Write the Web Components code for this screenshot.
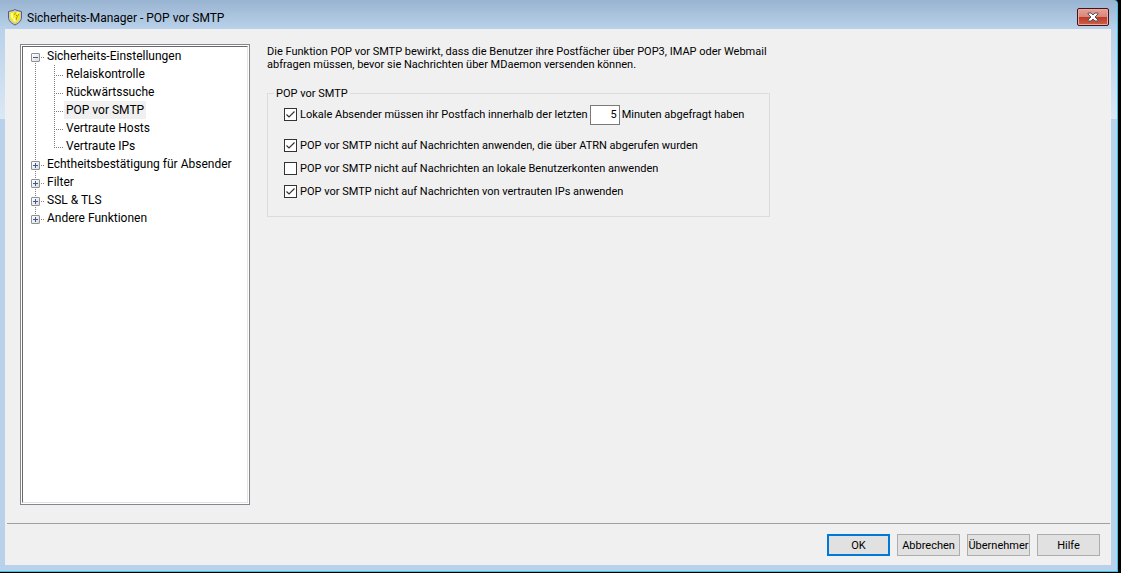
<!DOCTYPE html>
<html lang="de">
<head>
<meta charset="utf-8">
<title>Sicherheits-Manager - POP vor SMTP</title>
<style>
  body {
    margin: 0;
    background: #000;
    font: 11px/13px Roboto, "Liberation Sans", sans-serif;
    color: #000;
  }
</style>
</head>
<body>
<app-window heading="Sicherheits-Manager - POP vor SMTP">
  <tree-view slot="nav">
    <tree-item label="Sicherheits-Einstellungen" open>
      <tree-item label="Relaiskontrolle"></tree-item>
      <tree-item label="Rückwärtssuche"></tree-item>
      <tree-item label="POP vor SMTP" selected></tree-item>
      <tree-item label="Vertraute Hosts"></tree-item>
      <tree-item label="Vertraute IPs"></tree-item>
    </tree-item>
    <tree-item label="Echtheitsbestätigung für Absender" closed></tree-item>
    <tree-item label="Filter" closed></tree-item>
    <tree-item label="SSL &amp; TLS" closed></tree-item>
    <tree-item label="Andere Funktionen" closed></tree-item>
  </tree-view>
  <pop-settings></pop-settings>
  <push-button slot="actions" label="OK" primary></push-button>
  <push-button slot="actions" label="Abbrechen"></push-button>
  <push-button slot="actions" label="Übernehmer"></push-button>
  <push-button slot="actions" label="Hilfe"></push-button>
</app-window>

<script>
// Window frame: title bar, navigation, page content and button bar
class AppWindow extends HTMLElement {
  connectedCallback() {
    this.attachShadow({ mode: 'open' }).innerHTML = `
      <style>
        :host {
          display: flex;
          flex-direction: column;
          box-sizing: border-box;
          min-height: calc(100vh - 1px);
          margin: 0 3px 1px 0;
          padding: 0 6px 6px 5px;
          border: solid #35c5e4;
          border-width: 0 1px 1px 0;
          border-top-right-radius: 4px;
          background: linear-gradient(#99b4d1, #b9d1ea 29px, #dbe8f5 119px, #b9d1ea 119px);
        }
        header {
          display: flex;
          align-items: center;
          gap: 4px;
          height: 29px;
          padding: 5px 2px 0 2px;
          box-sizing: border-box;
        }
        h1 {
          flex: 1;
          margin: 0;
          padding-top: 1px;
          font: 12px/16px Roboto, "Open Sans", sans-serif;
        }
        .close {
          display: grid;
          place-items: center;
          width: 32px;
          height: 18px;
          padding: 0;
          border: 1px solid #43141c;
          border-radius: 2px;
          background: linear-gradient(#e8a198, #d8877a 48%, #bb3a26 50%, #d0614a);
          box-shadow: inset 0 0 0 1px #e9aaa0;
        }
        .client {
          flex: 1;
          display: flex;
          flex-direction: column;
          background: #f0f0f0;
        }
        .body {
          flex: 1;
          display: flex;
          gap: 17px;
          padding: 15px 15px 18px;
        }
        nav {
          display: flex;
          flex: 0 0 230px;
        }
        main {
          flex: 1;
          padding-top: 1px;
        }
        footer {
          display: flex;
          justify-content: flex-end;
          gap: 7px;
          margin: 0 1px 0 2px;
          padding: 10px 10px 9px;
          border-top: 1px solid #a0a0a0;
        }
        svg {
          display: block;
        }
      </style>
      <header>
        <svg width="16" height="18" viewBox="0 0 16 18" aria-hidden="true">
          <path d="M8 1.500 10 2.500 14.500 3.500V9C14.500 13 12 15 8 17 4 15 1.500 13 1.500 9V3.500L6 2.500Z" fill="#c9ccce" stroke="#5c6064"/>
          <path d="M8 4H13V9C13 12 11 13.500 8 15 5 13.500 3 12 3 9V4Z" fill="#f6ee10"/>
          <path d="M4 5H6V11L4 9ZM7 9 9 12 8 14 6 12ZM10 4H12L11 7Z" fill="#fffcc8"/>
          <path d="M8.500 4.500 7.500 7M12 6 10 9 9 12" fill="none" stroke="#a39d1c"/>
          <path d="M9 7h1v1H9z" fill="#e0701c"/>
        </svg>
        <h1></h1>
        <button class="close" type="button" aria-label="Schließen">
          <svg width="12" height="10" viewBox="0 0 12 10" aria-hidden="true">
            <path d="M1 1H4L6 3 8 1H11V2L8 5 11 8V9H8L6 7 4 9H1V8L4 5 1 2Z" fill="#fff" stroke="#56505c"/>
          </svg>
        </button>
      </header>
      <div class="client">
        <div class="body">
          <nav><slot name="nav"></slot></nav>
          <main><slot></slot></main>
        </div>
        <footer><slot name="actions"></slot></footer>
      </div>
    `;
    this.shadowRoot.querySelector('h1').textContent = this.getAttribute('heading');
  }
}

// Sunken box that holds the tree items
class TreeView extends HTMLElement {
  connectedCallback() {
    this.attachShadow({ mode: 'open' }).innerHTML = `
      <style>
        :host {
          flex: 1;
          display: flex;
          padding: 1px;
          border: 1px solid #828790;
          background: #fff;
          font: 12px/18px Roboto, "Open Sans", sans-serif;
        }
        div {
          flex: 1;
          border: 1px solid;
          border-color: #696969 #e3e3e3 #e3e3e3 #696969;
        }
      </style>
      <div role="tree"><slot></slot></div>
    `;
  }
}

// One tree node; child nodes go in the slot and are indented under it
class TreeItem extends HTMLElement {
  connectedCallback() {
    this.attachShadow({ mode: 'open' }).innerHTML = `
      <style>
        :host {
          display: block;
          background: repeating-linear-gradient(#808080 0 1px, transparent 1px 2px) 12px 0 / 1px 100% no-repeat;
        }
        :host(:last-child) {
          background-size: 1px 11px;
        }
        :host([open]) {
          background-position-y: 10px;
        }
        .row {
          display: flex;
          height: 18px;
        }
        .gutter {
          flex: 0 0 22px;
          box-sizing: border-box;
          padding: 6px 0 0 8px;
          background: repeating-linear-gradient(90deg, #808080 0 1px, transparent 1px 2px) 12px 10px / 9px 1px no-repeat;
        }
        button {
          display: block;
          width: 9px;
          height: 9px;
          padding: 0;
          border: 1px solid #919191;
          border-radius: 1px;
          background:
            linear-gradient(#3b5a9a, #3b5a9a) 1px 3px / 5px 1px no-repeat,
            linear-gradient(135deg, #fff, #dcdcdc);
        }
        :host([closed]) button {
          background:
            linear-gradient(#3b5a9a, #3b5a9a) 1px 3px / 5px 1px no-repeat,
            linear-gradient(#3b5a9a, #3b5a9a) 3px 1px / 1px 5px no-repeat,
            linear-gradient(135deg, #fff, #dcdcdc);
        }
        .label {
          padding: 0 2px;
          white-space: nowrap;
        }
        :host([selected]) .label {
          background: #f0f0f0;
        }
        .children {
          padding-left: 19px;
        }
        :host([closed]) .children {
          display: none;
        }
      </style>
      <div class="row">
        <span class="gutter"></span>
        <span class="label" role="treeitem"></span>
      </div>
      <div class="children" role="group"><slot></slot></div>
    `;
    const label = this.getAttribute('label');
    this.shadowRoot.querySelector('.label').textContent = label;
    if (this.hasAttribute('open') || this.hasAttribute('closed')) {
      const button = document.createElement('button');
      button.type = 'button';
      button.setAttribute('aria-label', label);
      button.addEventListener('click', () => {
        this.toggleAttribute('closed');
      });
      this.shadowRoot.querySelector('.gutter').appendChild(button);
    }
  }
}

// Checkbox with its label
class CheckOption extends HTMLElement {
  connectedCallback() {
    this.attachShadow({ mode: 'open' }).innerHTML = `
      <style>
        :host {
          display: block;
        }
        label {
          display: flex;
          align-items: center;
          gap: 3px;
        }
        .box {
          display: grid;
        }
        input, svg {
          grid-area: 1 / 1;
        }
        input {
          appearance: none;
          box-sizing: border-box;
          width: 13px;
          height: 13px;
          margin: 0;
          border: 1px solid #333;
          background: #fff;
        }
        svg {
          visibility: hidden;
          pointer-events: none;
        }
        input:checked + svg {
          visibility: visible;
        }
      </style>
      <label>
        <span class="box">
          <input type="checkbox">
          <svg width="13" height="13" viewBox="0 0 13 13" aria-hidden="true">
            <path d="M2.500 6.500 5 9 10.500 3.500" fill="none" stroke="#333" stroke-width="1.200"/>
          </svg>
        </span>
        <span><slot></slot></span>
      </label>
    `;
    this.shadowRoot.querySelector('input').checked = this.hasAttribute('checked');
  }
}

// Settings page "POP vor SMTP"
class PopSettings extends HTMLElement {
  connectedCallback() {
    this.attachShadow({ mode: 'open' }).innerHTML = `
      <style>
        :host {
          display: block;
          max-width: 503px;
        }
        p {
          margin: 0 0 16px;
        }
        fieldset {
          margin: 0;
          padding: 3px 16px 13px;
          border: 1px solid #dcdcdc;
        }
        legend {
          margin-left: -10px;
          padding: 0 2px;
        }
        .interval {
          display: flex;
          align-items: center;
          gap: 2px;
          margin-bottom: 8px;
        }
        .interval label {
          display: flex;
          align-items: center;
          gap: 2px;
        }
        .interval input {
          box-sizing: border-box;
          width: 30px;
          height: 20px;
          padding: 0 2px;
          border: 1px solid #7a7a7a;
          background: #fff;
          font: inherit;
          text-align: right;
        }
        check-option {
          height: 23px;
          align-content: center;
        }
      </style>
      <p>Die Funktion POP vor SMTP bewirkt, dass die Benutzer ihre Postfächer über POP3, IMAP oder Webmail abfragen müssen, bevor sie Nachrichten über MDaemon versenden können.</p>
      <fieldset>
        <legend>POP vor SMTP</legend>
        <div class="interval">
          <check-option checked>Lokale Absender müssen ihr Postfach innerhalb der letzten</check-option>
          <label><input type="text" inputmode="numeric" value="5"> Minuten abgefragt haben</label>
        </div>
        <check-option checked>POP vor SMTP nicht auf Nachrichten anwenden, die über ATRN abgerufen wurden</check-option>
        <check-option>POP vor SMTP nicht auf Nachrichten an lokale Benutzerkonten anwenden</check-option>
        <check-option checked>POP vor SMTP nicht auf Nachrichten von vertrauten IPs anwenden</check-option>
      </fieldset>
    `;
  }
}

// Button of the bottom bar
class PushButton extends HTMLElement {
  connectedCallback() {
    this.attachShadow({ mode: 'open' }).innerHTML = `
      <style>
        :host {
          display: block;
        }
        button {
          display: block;
          box-sizing: border-box;
          min-width: 63px;
          height: 22px;
          padding: 0;
          border: 1px solid #adadad;
          background: #e1e1e1;
          color: inherit;
          font: inherit;
        }
        :host([primary]) button {
          border: 2px solid #0078d7;
        }
      </style>
      <button type="button"></button>
    `;
    this.shadowRoot.querySelector('button').textContent = this.getAttribute('label');
  }
}

customElements.define('app-window', AppWindow);
customElements.define('tree-view', TreeView);
customElements.define('tree-item', TreeItem);
customElements.define('check-option', CheckOption);
customElements.define('pop-settings', PopSettings);
customElements.define('push-button', PushButton);
</script>
</body>
</html>
